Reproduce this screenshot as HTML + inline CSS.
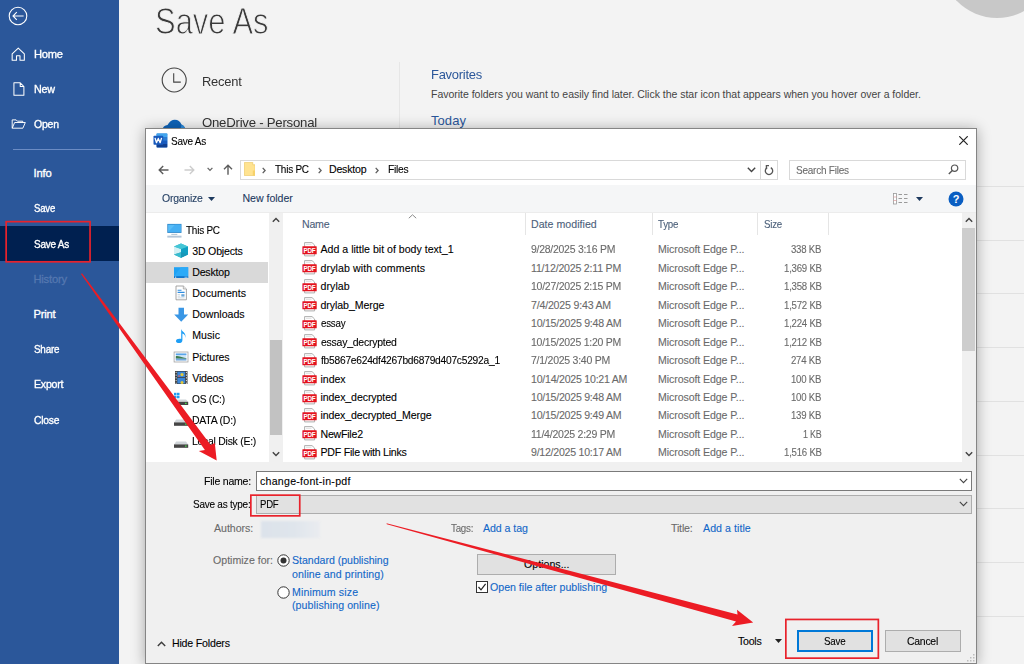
<!DOCTYPE html>
<html>
<head>
<meta charset="utf-8">
<title>Save As</title>
<style>
*{box-sizing:border-box;margin:0;padding:0}
html,body{width:1024px;height:664px;overflow:hidden;background:#f3f3f3;font-family:"Liberation Sans",sans-serif;}
body{position:relative}
.a{position:absolute;white-space:nowrap;line-height:1}
/* sidebar */
#side{position:absolute;left:0;top:0;width:119px;height:664px;background:#2b579a}
#side .t{position:absolute;left:33.5px;color:#fff;font-size:11.2px;line-height:14px;white-space:nowrap;-webkit-text-stroke:0.35px #fff}
#sel{position:absolute;left:0;top:226px;width:119px;height:35px;background:#002050}
/* backstage */
.h1{left:152.6px;top:3.3px;font-size:37.5px;color:#3a3a3a;transform-origin:0 0;transform:scaleX(0.825);-webkit-text-stroke:1px #f3f3f3}
.bk{font-size:13.5px;color:#333}
/* dialog */
#dlg{position:absolute;left:145px;top:128px;width:832px;height:536px;background:#fff;border:1px solid #858585;box-shadow:0 1px 13px rgba(0,0,0,.32)}
.tx{position:absolute;white-space:nowrap;font-size:10.6px;line-height:14px;color:#000;-webkit-text-stroke:0.1px currentColor}
.g{color:#6a6a6a}
.hd{color:#4c607a}
.lk{color:#1267c8}

/* dialog chrome */
#wrap{position:absolute;left:0;top:0;width:1024px;height:664px}
.bx{position:absolute}
.btn{position:absolute;background:#e1e1e1;border:1px solid #adadad}
</style>
</head>
<body>
<!-- backstage -->
<svg class="bx" style="left:956px;top:0" width="68" height="20" viewBox="0 0 68 20"><circle cx="41" cy="-38" r="56" fill="#c8c8c8"/></svg>
<div class="bx" style="left:399px;top:62px;width:1px;height:602px;background:#e6e6e6"></div>
<svg class="bx" style="left:161px;top:67.4px" width="27" height="27" viewBox="0 0 27 27"><circle cx="13.2" cy="13" r="12" fill="none" stroke="#444" stroke-width="1.1"/><path d="M12.7 6.3 V15.1 H19.8" stroke="#444" stroke-width="1.1" fill="none"/></svg>
<div class="a bk" style="left:201.5px;top:74.6px;letter-spacing:-0.25px;transform-origin:0 0;transform:scaleX(0.957)">Recent</div>
<svg class="bx" style="left:161px;top:119px" width="28" height="12" viewBox="0 0 28 12"><path d="M0.8 12 C1.5 8 4 6.2 6.5 6 C8.5 2.5 11 0.8 13.8 0.8 C17 0.8 19.3 2.8 20.5 5.5 C23 6.5 24.5 9 24.8 12 Z" fill="#0f64b9"/><path d="M20.5 5.5 C23 6.5 24.5 9 24.8 12 H18 C19.5 10 20.3 8 20.5 5.5 Z" fill="#2e8fe0"/></svg>
<div class="a bk" style="left:201.5px;top:115.9px;letter-spacing:-0.25px;transform-origin:0 0;transform:scaleX(0.978)">OneDrive - Personal</div>
<div class="a" style="left:431px;top:67.9px;font-size:13px;color:#2b579a;letter-spacing:-0.25px;transform-origin:0 0;transform:scaleX(0.996)">Favorites</div>
<div class="a" style="left:431px;top:88.8px;font-size:10.5px;color:#444;letter-spacing:-0.02px">Favorite folders you want to easily find later. Click the star icon that appears when you hover over a folder.</div>
<div class="a" style="left:431px;top:114.4px;font-size:13px;color:#2b579a;letter-spacing:0.06px">Today</div>
<div class="bx" style="left:977px;top:186px;width:47px;height:1px;background:#e1e1e1"></div>
<div class="bx" style="left:977px;top:240px;width:47px;height:1px;background:#e1e1e1"></div>
<div class="bx" style="left:977px;top:293px;width:47px;height:1px;background:#e1e1e1"></div>
<div class="bx" style="left:977px;top:347px;width:47px;height:1px;background:#e1e1e1"></div>
<div class="bx" style="left:977px;top:401px;width:47px;height:1px;background:#e1e1e1"></div>
<div class="bx" style="left:977px;top:455px;width:47px;height:1px;background:#e1e1e1"></div>
<div class="bx" style="left:977px;top:508px;width:47px;height:1px;background:#e1e1e1"></div>
<div class="bx" style="left:977px;top:562px;width:47px;height:1px;background:#e1e1e1"></div>
<div class="bx" style="left:977px;top:616px;width:47px;height:1px;background:#e1e1e1"></div>
<div class="a h1" style="left:155px">Save As</div>

<div id="side">
  <div id="sel"></div>
  <svg class="bx" style="left:8px;top:5.5px" width="20" height="20" viewBox="0 0 20 20"><circle cx="10" cy="10" r="8.8" fill="none" stroke="#fff" stroke-width="1.1"/><path d="M15.6 10 H5.3 M8.8 6.2 L5 10 L8.8 13.8" stroke="#fff" stroke-width="1.1" fill="none"/></svg>
  <svg class="bx" style="left:11.2px;top:46.6px" width="14.5" height="14.5" viewBox="0 0 15 15"><path d="M1.2 7 L7.5 1.2 L13.8 7 V13.8 H9.3 V9 H5.7 V13.8 H1.2 Z" fill="none" stroke="#fff" stroke-width="1.1" stroke-linejoin="round"/></svg>
  <svg class="bx" style="left:12.5px;top:82px" width="12" height="14" viewBox="0 0 13 15"><path d="M1 0.8 H7.8 L11.8 4.8 V14.2 H1 Z M7.8 0.8 V4.8 H11.8" fill="none" stroke="#fff" stroke-width="1.1" stroke-linejoin="round"/></svg>
  <svg class="bx" style="left:10.7px;top:118.7px" width="15.5" height="10.5" viewBox="0 0 17 12"><path d="M1 10.5 V1 H5.5 L7 2.5 H13 V4 M1 10.5 L3.8 4 H16 L13.2 10.5 Z" fill="none" stroke="#fff" stroke-width="1.1" stroke-linejoin="round"/></svg>
  <div class="bx" style="left:13px;top:148.5px;width:88px;height:1px;background:#6b8cc4"></div>
  <div class="t" style="top:47px;letter-spacing:-0.25px;transform-origin:0 0;transform:scaleX(0.997)">Home</div>
  <div class="t" style="top:82px;letter-spacing:-0.25px;transform-origin:0 0;transform:scaleX(0.959)">New</div>
  <div class="t" style="top:117px;letter-spacing:-0.25px;transform-origin:0 0;transform:scaleX(0.938)">Open</div>
  <div class="t" style="top:166px;letter-spacing:-0.11px">Info</div>
  <div class="t" style="top:201px;letter-spacing:-0.25px;transform-origin:0 0;transform:scaleX(0.857)">Save</div>
  <div class="t" style="top:237px;letter-spacing:-0.25px;transform-origin:0 0;transform:scaleX(0.891)">Save As</div>
  <div class="t" style="top:272px;color:#5577b0;-webkit-text-stroke:0.3px #5577b0;letter-spacing:-0.22px">History</div>
  <div class="t" style="top:307px;letter-spacing:-0.20px">Print</div>
  <div class="t" style="top:342px;letter-spacing:-0.25px;transform-origin:0 0;transform:scaleX(0.883)">Share</div>
  <div class="t" style="top:377px;letter-spacing:-0.25px;transform-origin:0 0;transform:scaleX(0.948)">Export</div>
  <div class="t" style="top:413px;letter-spacing:-0.25px;transform-origin:0 0;transform:scaleX(0.923)">Close</div>
</div>

<div id="dlg"></div>

<div id="wrap">
<!-- title bar -->
<svg class="bx" style="left:152.5px;top:133.3px" width="15" height="15" viewBox="0 0 15 15">
  <rect x="3.6" y="0.5" width="10.7" height="13.9" rx="0.8" fill="#2b7cd3"/>
  <rect x="3.6" y="0.5" width="10.7" height="3.6" fill="#41a5ee"/>
  <rect x="3.6" y="4.1" width="10.7" height="3.5" fill="#2b7cd3"/>
  <rect x="3.6" y="7.6" width="10.7" height="3.4" fill="#185abd"/>
  <rect x="3.6" y="11" width="10.7" height="3.4" fill="#103f91"/>
  <rect x="0.5" y="2.7" width="9.7" height="9" rx="0.8" fill="#185abd"/>
  <path d="M2 4.9 L3.5 9.7 L5.3 5.4 L7.1 9.7 L8.6 4.9" fill="none" stroke="#fff" stroke-width="1.3" stroke-linejoin="round"/>
</svg>
<div class="tx" style="left:171.4px;top:134px;letter-spacing:-0.25px;transform-origin:0 0;transform:scaleX(0.943)">Save As</div>
<svg class="bx" style="left:959px;top:136px" width="9" height="9" viewBox="0 0 9 9"><path d="M0.3 0.3 L8.7 8.7 M8.7 0.3 L0.3 8.7" stroke="#222" stroke-width="1.2" fill="none"/></svg>

<!-- nav row -->
<svg class="bx" style="left:157.5px;top:164.5px" width="11" height="10" viewBox="0 0 11 10"><path d="M10.5 5 H1.3 M5.2 1 L1.2 5 L5.2 9" stroke="#5c5c5c" stroke-width="1.4" fill="none"/></svg>
<svg class="bx" style="left:183.5px;top:164.5px" width="11" height="10" viewBox="0 0 11 10"><path d="M0.5 5 H9.7 M5.8 1 L9.8 5 L5.8 9" stroke="#cdcdcd" stroke-width="1.4" fill="none"/></svg>
<svg class="bx" style="left:206.7px;top:167px" width="6" height="5" viewBox="0 0 6 5"><path d="M0.6 0.9 L3 3.4 L5.4 0.9" stroke="#666" stroke-width="1.3" fill="none"/></svg>
<svg class="bx" style="left:222.8px;top:164.3px" width="10" height="11" viewBox="0 0 10 11"><path d="M5 10.7 V1.3 M1 5.2 L5 1.2 L9 5.2" stroke="#5c5c5c" stroke-width="1.4" fill="none"/></svg>
<div class="bx" style="left:240px;top:160px;width:538px;height:20px;border:1px solid #d9d9d9;background:#fff"></div>
<div class="bx" style="left:760px;top:161px;width:1px;height:18px;background:#d9d9d9"></div>
<svg class="bx" style="left:243.7px;top:162px" width="11.5" height="14" viewBox="0 0 11.5 14"><path d="M0.4 0.4 H8.8 V2.8 H11.1 V13.6 H0.4 Z" fill="#ffe390" stroke="#ecc865" stroke-width="0.7"/><rect x="8.8" y="8.5" width="2.3" height="5.1" fill="#f7d26a"/></svg>
<svg class="bx" style="left:262px;top:166.5px" width="4" height="7" viewBox="0 0 4 7"><path d="M0.7 0.9 L3.1 3.5 L0.7 6.1" stroke="#5e5e5e" stroke-width="1.3" fill="none"/></svg>
<div class="tx" style="left:274.6px;top:162px;letter-spacing:-0.25px;transform-origin:0 0;transform:scaleX(0.941)">This PC</div>
<svg class="bx" style="left:317.5px;top:166.5px" width="4" height="7" viewBox="0 0 4 7"><path d="M0.7 0.9 L3.1 3.5 L0.7 6.1" stroke="#5e5e5e" stroke-width="1.3" fill="none"/></svg>
<div class="tx" style="left:329px;top:162px;letter-spacing:-0.21px">Desktop</div>
<svg class="bx" style="left:375px;top:166.5px" width="4" height="7" viewBox="0 0 4 7"><path d="M0.7 0.9 L3.1 3.5 L0.7 6.1" stroke="#5e5e5e" stroke-width="1.3" fill="none"/></svg>
<div class="tx" style="left:387.5px;top:162px;letter-spacing:-0.25px;transform-origin:0 0;transform:scaleX(0.970)">Files</div>
<svg class="bx" style="left:747px;top:167px" width="9" height="6" viewBox="0 0 9 6"><path d="M0.8 0.8 L4.5 4.6 L8.2 0.8" stroke="#444" stroke-width="1.4" fill="none"/></svg>
<svg class="bx" style="left:764px;top:165px" width="10" height="11" viewBox="0 0 10 11"><path d="M3.2 2.6 A3.7 3.7 0 1 0 6.8 2.6" stroke="#555" stroke-width="1.3" fill="none"/><path d="M5 0.6 H2.4 V3.4" stroke="#555" stroke-width="1.3" fill="none"/></svg>
<div class="bx" style="left:789px;top:160px;width:177px;height:20px;border:1px solid #d9d9d9;background:#fff"></div>
<div class="tx" style="left:796px;top:163px;color:#6d6d6d;letter-spacing:-0.25px;transform-origin:0 0;transform:scaleX(0.945)">Search Files</div>
<svg class="bx" style="left:948px;top:164px" width="11" height="11" viewBox="0 0 11 11"><circle cx="6.6" cy="4.2" r="3.2" stroke="#555" stroke-width="1.2" fill="none"/><path d="M4.3 6.5 L0.8 10" stroke="#555" stroke-width="1.4"/></svg>

<!-- toolbar -->
<div class="bx" style="left:146px;top:185px;width:830px;height:28px;background:#f5f6f7;border-bottom:1px solid #ececec"></div>
<div class="tx" style="left:162.3px;top:191.4px;color:#1e3a5f;letter-spacing:-0.25px;transform-origin:0 0;transform:scaleX(0.990)">Organize</div>
<svg class="bx" style="left:208px;top:197px" width="7" height="4" viewBox="0 0 7 4"><path d="M0 0 H7 L3.5 4 Z" fill="#1e3a5f"/></svg>
<div class="tx" style="left:242.5px;top:191.4px;color:#1e3a5f;letter-spacing:-0.03px">New folder</div>
<svg class="bx" style="left:893px;top:193px" width="16" height="12" viewBox="0 0 16 12">
  <rect x="0.5" y="0.5" width="3" height="10.5" fill="#fff" stroke="#9a9a9a" stroke-width="0.8"/>
  <path d="M0.5 4 H3.5 M0.5 7.5 H3.5" stroke="#d99" stroke-width="0.7"/>
  <path d="M5.5 1.5 H9 M11 1.5 H14.5 M5.5 5.5 H9 M11 5.5 H14.5 M5.5 9.5 H9 M11 9.5 H14.5" stroke="#9a9a9a" stroke-width="1"/>
</svg>
<svg class="bx" style="left:916px;top:197px" width="7" height="4" viewBox="0 0 7 4"><path d="M0 0 H7 L3.5 4 Z" fill="#1e3a5f"/></svg>
<svg class="bx" style="left:948px;top:191px" width="16" height="16" viewBox="0 0 16 16"><circle cx="8" cy="8" r="7.5" fill="#0a5ec2"/><text x="8" y="12" text-anchor="middle" font-family="Liberation Sans" font-weight="bold" font-size="11" fill="#fff">?</text></svg>
<!-- nav pane -->
<div class="bx" style="left:146px;top:262px;width:122px;height:21px;background:#d9d9d9"></div>
<div class="bx" style="left:269px;top:213px;width:14px;height:249px;background:#f0f0f0"></div>
<div class="bx" style="left:269.5px;top:340px;width:12.5px;height:95px;background:#c2c2c2"></div>
<svg class="bx" style="left:272px;top:217px" width="8" height="6" viewBox="0 0 8 6"><path d="M0.8 4.8 L4 1.4 L7.2 4.8" stroke="#444" stroke-width="1.4" fill="none"/></svg>
<svg class="bx" style="left:272px;top:451px" width="8" height="6" viewBox="0 0 8 6"><path d="M0.8 1.2 L4 4.6 L7.2 1.2" stroke="#444" stroke-width="1.4" fill="none"/></svg>
<svg class="bx" style="left:165.5px;top:222.0px" width="16" height="16" viewBox="0 0 16 16"><rect x="1.3" y="1.9" width="14.2" height="9" fill="#2b86c9"/><rect x="2.1" y="2.7" width="12.6" height="7.4" fill="#58bdf8"/><path d="M2.1 10.1 L9 2.7 H14.7 V10.1 Z" fill="#45aff3"/><rect x="5.3" y="11.9" width="6" height="0.9" fill="#a9bccd"/><rect x="1.3" y="13.7" width="14.2" height="1.9" fill="#b4c6d8"/></svg>
<div class="tx" style="left:185.5px;top:222.7px;letter-spacing:-0.25px;transform-origin:0 0;transform:scaleX(0.941)">This PC</div>
<svg class="bx" style="left:173.2px;top:243.2px" width="16" height="16" viewBox="0 0 16 16"><path d="M8 0.4 L15 3.6 V11.4 L8 14.8 L1 11.4 V3.6 Z" fill="#2ab5cb"/><path d="M1 3.6 L8 6 V14.8 L1 11.4 Z" fill="#d3f1f5"/><path d="M8 6 L15 3.6 V11.4 L8 14.8 Z" fill="#10a0c3"/><path d="M1 3.6 L8 0.4 L15 3.6 L8 6 Z" fill="#45c6d6"/><path d="M1 11.4 L8 9.3 L15 11.4 L8 14.8 Z" fill="#1c93b2" opacity="0.75"/><path d="M1 11.4 L8 9.3 V14.8 Z" fill="#38bccf"/></svg>
<div class="tx" style="left:192.2px;top:243.8px;letter-spacing:-0.19px">3D Objects</div>
<svg class="bx" style="left:173.2px;top:264.3px" width="16" height="16" viewBox="0 0 16 16"><rect x="1" y="3.2" width="14.2" height="10.8" fill="#1fa2f4"/><path d="M1 12 L8 3.2 H15.2 V12 Z" fill="#2baaf8"/><rect x="1" y="12.2" width="14.2" height="1.8" fill="#1277cd"/><rect x="2" y="12.7" width="1.2" height="0.9" fill="#fff"/><rect x="11.5" y="12.8" width="3" height="0.7" fill="#cfe8fb"/></svg>
<div class="tx" style="left:192.2px;top:265.0px;letter-spacing:-0.21px">Desktop</div>
<svg class="bx" style="left:173.2px;top:285.4px" width="16" height="16" viewBox="0 0 16 16"><path d="M3 1 H10.3 L13.4 4 V14.8 H3 Z" fill="#fff" stroke="#8f8f8f" stroke-width="0.8"/><path d="M10.3 1 V4 H13.4" fill="#e8e8e8" stroke="#8f8f8f" stroke-width="0.6"/><path d="M4.6 5.2 H8.5 M4.6 7.4 H11.6" stroke="#2f8de0" stroke-width="1.1"/><rect x="8.3" y="9.2" width="3.2" height="2.4" fill="#6aa6d8"/><path d="M4.6 9.6 H7.2 M4.6 11.2 H7.2 M4.6 12.9 H11.6" stroke="#b9c6d2" stroke-width="0.7"/></svg>
<div class="tx" style="left:192.2px;top:286.1px;letter-spacing:0.03px">Documents</div>
<svg class="bx" style="left:173.2px;top:306.6px" width="16" height="16" viewBox="0 0 16 16"><path d="M5.5 0.8 H11 V7.4 H15.2 L8.2 14.8 L1.2 7.4 H5.5 Z" fill="#3a97e5"/></svg>
<div class="tx" style="left:192.2px;top:307.3px;letter-spacing:-0.00px">Downloads</div>
<svg class="bx" style="left:173.2px;top:327.8px" width="16" height="16" viewBox="0 0 16 16"><path d="M8.2 1 C9 4 13.5 4.5 12.3 10 C12.3 6.8 10.8 6 9.4 5.6 V12.2 C9.4 14.3 7.8 15 6 15 C4.2 15 3 14.2 3 12.9 C3 11.4 4.6 10.7 6.2 10.7 C7 10.7 7.6 10.8 8.2 11.1 Z" fill="#1e9ef5"/></svg>
<div class="tx" style="left:192.2px;top:328.4px;letter-spacing:0.05px">Music</div>
<svg class="bx" style="left:173.2px;top:348.9px" width="16" height="16" viewBox="0 0 16 16"><rect x="1.1" y="3" width="13.9" height="10" fill="#fff" stroke="#a3a3a3" stroke-width="0.8"/><rect x="2.8" y="4.5" width="10.6" height="7" fill="#cfe6f8"/><rect x="2.8" y="4.5" width="10.6" height="1.6" fill="#5aa5ea"/><path d="M2.8 9.6 V7.2 C5 6.6 8 8 13.4 9.2 V9.8 Z" fill="#3f7d4e"/><path d="M2.8 9.6 L13.4 9.8 V11.5 H2.8 Z" fill="#4d8fd0" opacity="0.7"/></svg>
<div class="tx" style="left:192.2px;top:349.6px;letter-spacing:-0.12px">Pictures</div>
<svg class="bx" style="left:173.2px;top:370.1px" width="16" height="16" viewBox="0 0 16 16"><rect x="2" y="1" width="12.5" height="13" fill="#3a3a3a"/><rect x="4.3" y="1.6" width="7.9" height="5.6" fill="#3b86d8"/><rect x="4.3" y="7.9" width="7.9" height="5.6" fill="#3b86d8"/><circle cx="9" cy="4.6" r="1.6" fill="#e3c83a"/><circle cx="9" cy="12.6" r="1.5" fill="#e3c83a"/><rect x="5" y="5.4" width="2" height="1.2" fill="#d85a5a"/><path d="M3.1 1.8 V14 M13.4 1.8 V14" stroke="#e6e6e6" stroke-width="1" stroke-dasharray="1.3 1.4"/></svg>
<div class="tx" style="left:192.2px;top:370.8px;letter-spacing:-0.17px">Videos</div>
<svg class="bx" style="left:173.2px;top:391.2px" width="16" height="16" viewBox="0 0 16 16"><rect x="1" y="1.8" width="2.5" height="2.5" fill="#1e9ef5"/><rect x="4" y="1.8" width="2.5" height="2.5" fill="#1e9ef5"/><rect x="1" y="4.8" width="2.5" height="2.5" fill="#1e9ef5"/><rect x="4" y="4.8" width="2.5" height="2.5" fill="#1e9ef5"/><path d="M3.2 8.4 H13 L15.2 10.8 H1 Z" fill="#d0d5d9"/><rect x="1" y="10.8" width="14.2" height="3.2" fill="#454545"/><rect x="12" y="11.8" width="1.6" height="1.2" fill="#4be04b"/></svg>
<div class="tx" style="left:192.2px;top:391.9px;letter-spacing:-0.25px;transform-origin:0 0;transform:scaleX(0.960)">OS (C:)</div>
<svg class="bx" style="left:173.2px;top:412.3px" width="16" height="16" viewBox="0 0 16 16"><path d="M3.2 7.6 H13 L15.2 10.4 H1 Z" fill="#d0d5d9"/><rect x="1" y="10.4" width="14.2" height="3.4" fill="#454545"/><rect x="12" y="11.5" width="1.6" height="1.2" fill="#4be04b"/></svg>
<div class="tx" style="left:192.2px;top:413.0px;letter-spacing:-0.25px;transform-origin:0 0;transform:scaleX(0.992)">DATA (D:)</div>
<svg class="bx" style="left:173.2px;top:433.5px" width="16" height="16" viewBox="0 0 16 16"><path d="M3.2 7.6 H13 L15.2 10.4 H1 Z" fill="#d0d5d9"/><rect x="1" y="10.4" width="14.2" height="3.4" fill="#454545"/><rect x="12" y="11.5" width="1.6" height="1.2" fill="#4be04b"/></svg>
<div class="tx" style="left:192.2px;top:434.2px;letter-spacing:-0.25px;transform-origin:0 0;transform:scaleX(0.983)">Local Disk (E:)</div>
<!-- file list -->
<div class="tx hd" style="left:302px;top:217px;letter-spacing:-0.22px">Name</div>
<div class="tx hd" style="left:531px;top:217px;letter-spacing:0.03px">Date modified</div>
<div class="tx hd" style="left:658px;top:217px;letter-spacing:-0.25px;transform-origin:0 0;transform:scaleX(0.919)">Type</div>
<div class="tx hd" style="left:764px;top:217px;letter-spacing:-0.25px;transform-origin:0 0;transform:scaleX(0.918)">Size</div>
<div class="bx" style="left:525px;top:213px;width:1px;height:22px;background:#e5e5e5"></div>
<div class="bx" style="left:652px;top:213px;width:1px;height:22px;background:#e5e5e5"></div>
<div class="bx" style="left:757px;top:213px;width:1px;height:22px;background:#e5e5e5"></div>
<div class="bx" style="left:828px;top:213px;width:1px;height:22px;background:#e5e5e5"></div>
<svg class="bx" style="left:408px;top:213.5px" width="9" height="5" viewBox="0 0 9 5"><path d="M0.8 4.2 L4.5 0.8 L8.2 4.2" stroke="#8a8a8a" stroke-width="1" fill="none"/></svg>
<svg class="bx" style="left:301.8px;top:241.9px" width="15" height="15" viewBox="0 0 15 15"><path d="M2.6 0.6 H10 L12.6 3 V13.9 H2.6 Z" fill="#fff" stroke="#a6a6a6" stroke-width="0.9"/><path d="M4 2.3 H9.5" stroke="#d5d5d5" stroke-width="0.8"/><rect x="0.4" y="4.2" width="14.3" height="8.1" rx="0.5" fill="#e3131f"/><text x="7.55" y="10.5" text-anchor="middle" font-family="Liberation Sans" font-weight="bold" font-size="6.3" fill="#fff" letter-spacing="-0.25">PDF</text></svg>
<div class="tx" style="left:320.5px;top:242.4px;letter-spacing:0.00px">Add a little bit of body text_1</div>
<div class="tx g" style="left:531px;top:242.4px;letter-spacing:-0.25px;transform-origin:0 0;transform:scaleX(0.986)">9/28/2025 3:16 PM</div>
<div class="tx g" style="left:658px;top:242.4px;letter-spacing:-0.09px">Microsoft Edge P...</div>
<div class="tx g" style="left:791.3px;top:242.4px;letter-spacing:-0.25px;transform-origin:0 0;transform:scaleX(0.908)">338 KB</div>
<svg class="bx" style="left:301.8px;top:260.3px" width="15" height="15" viewBox="0 0 15 15"><path d="M2.6 0.6 H10 L12.6 3 V13.9 H2.6 Z" fill="#fff" stroke="#a6a6a6" stroke-width="0.9"/><path d="M4 2.3 H9.5" stroke="#d5d5d5" stroke-width="0.8"/><rect x="0.4" y="4.2" width="14.3" height="8.1" rx="0.5" fill="#e3131f"/><text x="7.55" y="10.5" text-anchor="middle" font-family="Liberation Sans" font-weight="bold" font-size="6.3" fill="#fff" letter-spacing="-0.25">PDF</text></svg>
<div class="tx" style="left:320.5px;top:260.8px;letter-spacing:0.11px">drylab with comments</div>
<div class="tx g" style="left:531px;top:260.8px;letter-spacing:-0.21px">11/12/2025 2:11 PM</div>
<div class="tx g" style="left:658px;top:260.8px;letter-spacing:-0.09px">Microsoft Edge P...</div>
<div class="tx g" style="left:783.7px;top:260.8px;letter-spacing:-0.25px;transform-origin:0 0;transform:scaleX(0.909)">1,369 KB</div>
<svg class="bx" style="left:301.8px;top:278.8px" width="15" height="15" viewBox="0 0 15 15"><path d="M2.6 0.6 H10 L12.6 3 V13.9 H2.6 Z" fill="#fff" stroke="#a6a6a6" stroke-width="0.9"/><path d="M4 2.3 H9.5" stroke="#d5d5d5" stroke-width="0.8"/><rect x="0.4" y="4.2" width="14.3" height="8.1" rx="0.5" fill="#e3131f"/><text x="7.55" y="10.5" text-anchor="middle" font-family="Liberation Sans" font-weight="bold" font-size="6.3" fill="#fff" letter-spacing="-0.25">PDF</text></svg>
<div class="tx" style="left:320.5px;top:279.3px;letter-spacing:0.06px">drylab</div>
<div class="tx g" style="left:531px;top:279.3px;letter-spacing:-0.25px;transform-origin:0 0;transform:scaleX(0.990)">10/27/2025 2:15 PM</div>
<div class="tx g" style="left:658px;top:279.3px;letter-spacing:-0.09px">Microsoft Edge P...</div>
<div class="tx g" style="left:783.7px;top:279.3px;letter-spacing:-0.25px;transform-origin:0 0;transform:scaleX(0.909)">1,358 KB</div>
<svg class="bx" style="left:301.8px;top:297.2px" width="15" height="15" viewBox="0 0 15 15"><path d="M2.6 0.6 H10 L12.6 3 V13.9 H2.6 Z" fill="#fff" stroke="#a6a6a6" stroke-width="0.9"/><path d="M4 2.3 H9.5" stroke="#d5d5d5" stroke-width="0.8"/><rect x="0.4" y="4.2" width="14.3" height="8.1" rx="0.5" fill="#e3131f"/><text x="7.55" y="10.5" text-anchor="middle" font-family="Liberation Sans" font-weight="bold" font-size="6.3" fill="#fff" letter-spacing="-0.25">PDF</text></svg>
<div class="tx" style="left:320.5px;top:297.7px;letter-spacing:-0.07px">drylab_Merge</div>
<div class="tx g" style="left:531px;top:297.7px;letter-spacing:-0.19px">7/4/2025 9:43 AM</div>
<div class="tx g" style="left:658px;top:297.7px;letter-spacing:-0.09px">Microsoft Edge P...</div>
<div class="tx g" style="left:783.7px;top:297.7px;letter-spacing:-0.25px;transform-origin:0 0;transform:scaleX(0.909)">1,572 KB</div>
<svg class="bx" style="left:301.8px;top:315.7px" width="15" height="15" viewBox="0 0 15 15"><path d="M2.6 0.6 H10 L12.6 3 V13.9 H2.6 Z" fill="#fff" stroke="#a6a6a6" stroke-width="0.9"/><path d="M4 2.3 H9.5" stroke="#d5d5d5" stroke-width="0.8"/><rect x="0.4" y="4.2" width="14.3" height="8.1" rx="0.5" fill="#e3131f"/><text x="7.55" y="10.5" text-anchor="middle" font-family="Liberation Sans" font-weight="bold" font-size="6.3" fill="#fff" letter-spacing="-0.25">PDF</text></svg>
<div class="tx" style="left:320.5px;top:316.2px;letter-spacing:-0.25px;transform-origin:0 0;transform:scaleX(0.923)">essay</div>
<div class="tx g" style="left:531px;top:316.2px;letter-spacing:-0.25px;transform-origin:0 0;transform:scaleX(1.000)">10/15/2025 9:48 AM</div>
<div class="tx g" style="left:658px;top:316.2px;letter-spacing:-0.09px">Microsoft Edge P...</div>
<div class="tx g" style="left:783.7px;top:316.2px;letter-spacing:-0.25px;transform-origin:0 0;transform:scaleX(0.909)">1,224 KB</div>
<svg class="bx" style="left:301.8px;top:334.1px" width="15" height="15" viewBox="0 0 15 15"><path d="M2.6 0.6 H10 L12.6 3 V13.9 H2.6 Z" fill="#fff" stroke="#a6a6a6" stroke-width="0.9"/><path d="M4 2.3 H9.5" stroke="#d5d5d5" stroke-width="0.8"/><rect x="0.4" y="4.2" width="14.3" height="8.1" rx="0.5" fill="#e3131f"/><text x="7.55" y="10.5" text-anchor="middle" font-family="Liberation Sans" font-weight="bold" font-size="6.3" fill="#fff" letter-spacing="-0.25">PDF</text></svg>
<div class="tx" style="left:320.5px;top:334.6px;letter-spacing:-0.25px;transform-origin:0 0;transform:scaleX(0.990)">essay_decrypted</div>
<div class="tx g" style="left:531px;top:334.6px;letter-spacing:-0.25px;transform-origin:0 0;transform:scaleX(0.990)">10/15/2025 1:20 PM</div>
<div class="tx g" style="left:658px;top:334.6px;letter-spacing:-0.09px">Microsoft Edge P...</div>
<div class="tx g" style="left:783.7px;top:334.6px;letter-spacing:-0.25px;transform-origin:0 0;transform:scaleX(0.909)">1,212 KB</div>
<svg class="bx" style="left:301.8px;top:352.6px" width="15" height="15" viewBox="0 0 15 15"><path d="M2.6 0.6 H10 L12.6 3 V13.9 H2.6 Z" fill="#fff" stroke="#a6a6a6" stroke-width="0.9"/><path d="M4 2.3 H9.5" stroke="#d5d5d5" stroke-width="0.8"/><rect x="0.4" y="4.2" width="14.3" height="8.1" rx="0.5" fill="#e3131f"/><text x="7.55" y="10.5" text-anchor="middle" font-family="Liberation Sans" font-weight="bold" font-size="6.3" fill="#fff" letter-spacing="-0.25">PDF</text></svg>
<div class="tx" style="left:320.5px;top:353.1px;letter-spacing:-0.25px;transform-origin:0 0;transform:scaleX(0.965)">fb5867e624df4267bd6879d407c5292a_1</div>
<div class="tx g" style="left:531px;top:353.1px;letter-spacing:-0.25px;transform-origin:0 0;transform:scaleX(0.992)">7/1/2025 3:40 PM</div>
<div class="tx g" style="left:658px;top:353.1px;letter-spacing:-0.09px">Microsoft Edge P...</div>
<div class="tx g" style="left:791.3px;top:353.1px;letter-spacing:-0.25px;transform-origin:0 0;transform:scaleX(0.908)">274 KB</div>
<svg class="bx" style="left:301.8px;top:371.1px" width="15" height="15" viewBox="0 0 15 15"><path d="M2.6 0.6 H10 L12.6 3 V13.9 H2.6 Z" fill="#fff" stroke="#a6a6a6" stroke-width="0.9"/><path d="M4 2.3 H9.5" stroke="#d5d5d5" stroke-width="0.8"/><rect x="0.4" y="4.2" width="14.3" height="8.1" rx="0.5" fill="#e3131f"/><text x="7.55" y="10.5" text-anchor="middle" font-family="Liberation Sans" font-weight="bold" font-size="6.3" fill="#fff" letter-spacing="-0.25">PDF</text></svg>
<div class="tx" style="left:320.5px;top:371.6px;letter-spacing:-0.05px">index</div>
<div class="tx g" style="left:531px;top:371.6px;letter-spacing:-0.24px">10/14/2025 10:21 AM</div>
<div class="tx g" style="left:658px;top:371.6px;letter-spacing:-0.09px">Microsoft Edge P...</div>
<div class="tx g" style="left:791.3px;top:371.6px;letter-spacing:-0.25px;transform-origin:0 0;transform:scaleX(0.908)">100 KB</div>
<svg class="bx" style="left:301.8px;top:389.5px" width="15" height="15" viewBox="0 0 15 15"><path d="M2.6 0.6 H10 L12.6 3 V13.9 H2.6 Z" fill="#fff" stroke="#a6a6a6" stroke-width="0.9"/><path d="M4 2.3 H9.5" stroke="#d5d5d5" stroke-width="0.8"/><rect x="0.4" y="4.2" width="14.3" height="8.1" rx="0.5" fill="#e3131f"/><text x="7.55" y="10.5" text-anchor="middle" font-family="Liberation Sans" font-weight="bold" font-size="6.3" fill="#fff" letter-spacing="-0.25">PDF</text></svg>
<div class="tx" style="left:320.5px;top:390.0px;letter-spacing:-0.10px">index_decrypted</div>
<div class="tx g" style="left:531px;top:390.0px;letter-spacing:-0.25px;transform-origin:0 0;transform:scaleX(1.000)">10/15/2025 9:48 AM</div>
<div class="tx g" style="left:658px;top:390.0px;letter-spacing:-0.09px">Microsoft Edge P...</div>
<div class="tx g" style="left:791.3px;top:390.0px;letter-spacing:-0.25px;transform-origin:0 0;transform:scaleX(0.908)">100 KB</div>
<svg class="bx" style="left:301.8px;top:407.9px" width="15" height="15" viewBox="0 0 15 15"><path d="M2.6 0.6 H10 L12.6 3 V13.9 H2.6 Z" fill="#fff" stroke="#a6a6a6" stroke-width="0.9"/><path d="M4 2.3 H9.5" stroke="#d5d5d5" stroke-width="0.8"/><rect x="0.4" y="4.2" width="14.3" height="8.1" rx="0.5" fill="#e3131f"/><text x="7.55" y="10.5" text-anchor="middle" font-family="Liberation Sans" font-weight="bold" font-size="6.3" fill="#fff" letter-spacing="-0.25">PDF</text></svg>
<div class="tx" style="left:320.5px;top:408.4px;letter-spacing:-0.13px">index_decrypted_Merge</div>
<div class="tx g" style="left:531px;top:408.4px;letter-spacing:-0.25px;transform-origin:0 0;transform:scaleX(1.000)">10/15/2025 9:49 AM</div>
<div class="tx g" style="left:658px;top:408.4px;letter-spacing:-0.09px">Microsoft Edge P...</div>
<div class="tx g" style="left:791.3px;top:408.4px;letter-spacing:-0.25px;transform-origin:0 0;transform:scaleX(0.908)">139 KB</div>
<svg class="bx" style="left:301.8px;top:426.4px" width="15" height="15" viewBox="0 0 15 15"><path d="M2.6 0.6 H10 L12.6 3 V13.9 H2.6 Z" fill="#fff" stroke="#a6a6a6" stroke-width="0.9"/><path d="M4 2.3 H9.5" stroke="#d5d5d5" stroke-width="0.8"/><rect x="0.4" y="4.2" width="14.3" height="8.1" rx="0.5" fill="#e3131f"/><text x="7.55" y="10.5" text-anchor="middle" font-family="Liberation Sans" font-weight="bold" font-size="6.3" fill="#fff" letter-spacing="-0.25">PDF</text></svg>
<div class="tx" style="left:320.5px;top:426.9px;letter-spacing:-0.23px">NewFile2</div>
<div class="tx g" style="left:531px;top:426.9px;letter-spacing:-0.25px;transform-origin:0 0;transform:scaleX(0.995)">11/4/2025 2:29 PM</div>
<div class="tx g" style="left:658px;top:426.9px;letter-spacing:-0.09px">Microsoft Edge P...</div>
<div class="tx g" style="left:803.0px;top:426.9px;letter-spacing:-0.25px;transform-origin:0 0;transform:scaleX(0.842)">1 KB</div>
<svg class="bx" style="left:301.8px;top:444.8px" width="15" height="15" viewBox="0 0 15 15"><path d="M2.6 0.6 H10 L12.6 3 V13.9 H2.6 Z" fill="#fff" stroke="#a6a6a6" stroke-width="0.9"/><path d="M4 2.3 H9.5" stroke="#d5d5d5" stroke-width="0.8"/><rect x="0.4" y="4.2" width="14.3" height="8.1" rx="0.5" fill="#e3131f"/><text x="7.55" y="10.5" text-anchor="middle" font-family="Liberation Sans" font-weight="bold" font-size="6.3" fill="#fff" letter-spacing="-0.25">PDF</text></svg>
<div class="tx" style="left:320.5px;top:445.3px;letter-spacing:-0.24px">PDF File with Links</div>
<div class="tx g" style="left:531px;top:445.3px;letter-spacing:-0.25px;transform-origin:0 0;transform:scaleX(1.000)">9/12/2025 10:17 AM</div>
<div class="tx g" style="left:658px;top:445.3px;letter-spacing:-0.09px">Microsoft Edge P...</div>
<div class="tx g" style="left:783.7px;top:445.3px;letter-spacing:-0.25px;transform-origin:0 0;transform:scaleX(0.909)">1,516 KB</div>
<div class="bx" style="left:962px;top:213px;width:14px;height:249px;background:#f0f0f0"></div>
<div class="bx" style="left:962px;top:228px;width:13px;height:123px;background:#cdcdcd"></div>
<svg class="bx" style="left:965px;top:217px" width="8" height="6" viewBox="0 0 8 6"><path d="M0.8 4.8 L4 1.4 L7.2 4.8" stroke="#444" stroke-width="1.4" fill="none"/></svg>
<svg class="bx" style="left:965px;top:451px" width="8" height="6" viewBox="0 0 8 6"><path d="M0.8 1.2 L4 4.6 L7.2 1.2" stroke="#444" stroke-width="1.4" fill="none"/></svg>
<!-- bottom panel -->
<div class="bx" style="left:146px;top:462px;width:830px;height:201px;background:#f0f0f0"></div>
<div class="tx" style="left:204.4px;top:474px;letter-spacing:-0.25px;transform-origin:0 0;transform:scaleX(0.999)">File name:</div>
<div class="bx" style="left:256px;top:471px;width:716px;height:20px;background:#fff;border:1px solid #7a7a7a"></div>
<div class="tx" style="left:260px;top:473.5px;letter-spacing:0.26px">change-font-in-pdf</div>
<svg class="bx" style="left:959px;top:478px" width="9" height="6" viewBox="0 0 9 6"><path d="M0.8 0.8 L4.5 4.6 L8.2 0.8" stroke="#444" stroke-width="1.1" fill="none"/></svg>
<div class="tx" style="left:192.9px;top:496.5px;letter-spacing:-0.25px;transform-origin:0 0;transform:scaleX(0.943)">Save as type:</div>
<div class="bx" style="left:256px;top:495px;width:716px;height:18.5px;background:#e1e1e1;border:1px solid #adadad"></div>
<div class="tx" style="left:260px;top:497px;letter-spacing:-0.25px;transform-origin:0 0;transform:scaleX(0.905)">PDF</div>
<svg class="bx" style="left:959px;top:501px" width="9" height="6" viewBox="0 0 9 6"><path d="M0.8 0.8 L4.5 4.6 L8.2 0.8" stroke="#444" stroke-width="1.1" fill="none"/></svg>
<div class="tx g" style="left:214px;top:521px;letter-spacing:-0.04px">Authors:</div>
<div class="bx" style="left:261px;top:520.5px;width:58.5px;height:17px;background:linear-gradient(90deg,#dce3eb,#dfe5ec 55%,#eaecf0);filter:blur(1.2px)"></div>
<div class="tx g" style="left:451px;top:521px;letter-spacing:-0.25px;transform-origin:0 0;transform:scaleX(0.922)">Tags:</div>
<div class="tx lk" style="left:483px;top:521px;letter-spacing:-0.06px">Add a tag</div>
<div class="tx g" style="left:671px;top:521px;letter-spacing:-0.16px">Title:</div>
<div class="tx lk" style="left:703px;top:521px;letter-spacing:0.06px">Add a title</div>
<div class="tx g" style="left:213px;top:553px;letter-spacing:-0.00px">Optimize for:</div>
<svg class="bx" style="left:277px;top:554px" width="13" height="13" viewBox="0 0 13 13"><circle cx="6.5" cy="6.5" r="5.7" fill="#fff" stroke="#333" stroke-width="1"/><circle cx="6.5" cy="6.5" r="3" fill="#333"/></svg>
<div class="tx lk" style="left:292px;top:553px;letter-spacing:-0.03px">Standard (publishing</div>
<div class="tx lk" style="left:292px;top:566.5px;letter-spacing:0.09px">online and printing)</div>
<svg class="bx" style="left:277px;top:586px" width="13" height="13" viewBox="0 0 13 13"><circle cx="6.5" cy="6.5" r="5.7" fill="#fff" stroke="#333" stroke-width="1"/></svg>
<div class="tx lk" style="left:292px;top:585px;letter-spacing:0.12px">Minimum size</div>
<div class="tx lk" style="left:292px;top:597.7px;letter-spacing:0.08px">(publishing online)</div>
<div class="btn" style="left:477px;top:554px;width:139px;height:21px"></div>
<div class="tx" style="left:524px;top:557px;letter-spacing:0.02px">Options...</div>
<svg class="bx" style="left:476px;top:581px" width="12" height="12" viewBox="0 0 12 12"><rect x="0.5" y="0.5" width="11" height="11" fill="#fff" stroke="#333" stroke-width="1"/><path d="M2.5 6 L5 8.8 L9.6 2.8" stroke="#222" stroke-width="1.2" fill="none"/></svg>
<div class="tx lk" style="left:490px;top:580px;letter-spacing:-0.00px">Open file after publishing</div>
<svg class="bx" style="left:157px;top:641px" width="9" height="6" viewBox="0 0 9 6"><path d="M0.8 5 L4.5 1.2 L8.2 5" stroke="#3c3c3c" stroke-width="1.4" fill="none"/></svg>
<div class="tx" style="left:172px;top:636px;letter-spacing:-0.19px">Hide Folders</div>
<div class="tx" style="left:738px;top:634px;letter-spacing:-0.25px">Tools</div>
<svg class="bx" style="left:775px;top:639px" width="7" height="4" viewBox="0 0 7 4"><path d="M0 0 H7 L3.5 4 Z" fill="#222"/></svg>
<div class="btn" style="left:797px;top:630px;width:76px;height:22px;border:2px solid #0078d7"></div>
<div class="tx" style="left:824px;top:634px;letter-spacing:-0.25px;transform-origin:0 0;transform:scaleX(0.924)">Save</div>
<div class="btn" style="left:885px;top:630px;width:76px;height:22px"></div>
<div class="tx" style="left:907px;top:634px;letter-spacing:-0.25px;transform-origin:0 0;transform:scaleX(0.985)">Cancel</div>
<svg class="bx" style="left:967px;top:654px" width="8" height="8" viewBox="0 0 8 8"><g fill="#bdbdbd"><rect x="6" y="0" width="1.5" height="1.5"/><rect x="3" y="3" width="1.5" height="1.5"/><rect x="6" y="3" width="1.5" height="1.5"/><rect x="0" y="6" width="1.5" height="1.5"/><rect x="3" y="6" width="1.5" height="1.5"/><rect x="6" y="6" width="1.5" height="1.5"/></g></svg>
<!-- red annotations -->
<svg class="bx" style="left:0;top:0" width="1024" height="664" viewBox="0 0 1024 664">
  <g fill="none" stroke="#e8222b" stroke-width="1.7"><rect x="6.15" y="221.65" width="83.90" height="40.15"/><rect x="250.85" y="495.15" width="48.90" height="20.70"/><rect x="785.85" y="619.45" width="92.50" height="38.70"/></g>
  <g fill="#ec1c24">
    <path d="M81.0 273.9 L82.0 273.3 L210.7 445.0 L214.8 443.0 L216.7 460.6 L198.8 451.1 L204.9 450.0 Z"/>
    <path d="M386.5 523.2 L386.8 524.3 L736.0 621.5 L732.0 626.0 L753.2 622.4 L737.0 609.8 L737.5 614.5 Z"/>
  </g>
</svg>
</div>

</body>
</html>
